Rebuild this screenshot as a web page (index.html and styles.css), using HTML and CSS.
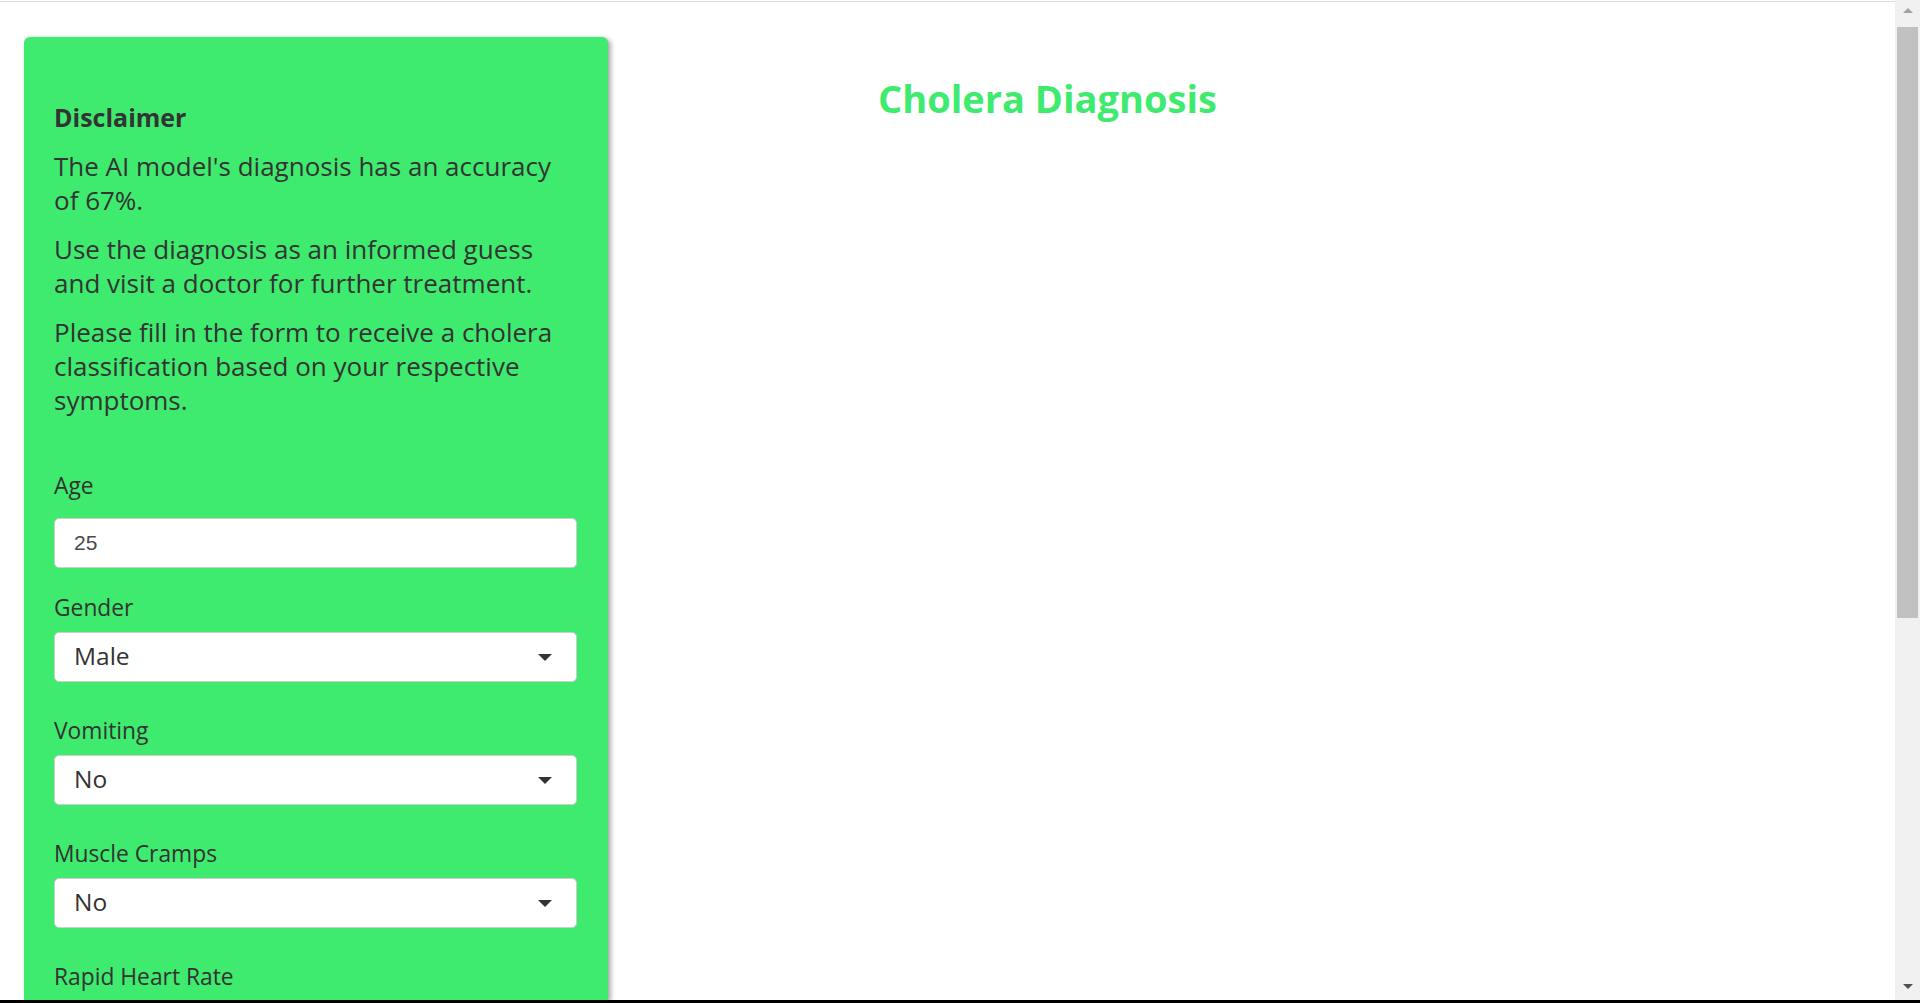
FILE: index.html
```html
<!DOCTYPE html>
<html lang="en">
<head>
<meta charset="utf-8">
<title>Cholera Diagnosis</title>
<link rel="stylesheet" href="styles.css">
</head>
<body>
<div class="window">
  <div class="viewport">
    <aside class="sidebar">
      <h3 class="title">Disclaimer</h3>
      <p class="text">The AI model's diagnosis has an accuracy of 67%.</p>
      <p class="text">Use the diagnosis as an informed guess and visit a doctor for further treatment.</p>
      <p class="text">Please fill in the form to receive a cholera classification based on your respective symptoms.</p>
      <div class="form">
        <div class="field field-text">
          <label class="label" for="age">Age</label>
          <input class="input" id="age" type="text" value="25">
        </div>
        <div class="field">
          <label class="label" for="gender">Gender</label>
          <div class="select-wrap"><select class="select" id="gender"><option>Male</option><option>Female</option></select></div>
        </div>
        <div class="field">
          <label class="label" for="vomit">Vomiting</label>
          <div class="select-wrap"><select class="select" id="vomit"><option>No</option><option>Yes</option></select></div>
        </div>
        <div class="field">
          <label class="label" for="cramps">Muscle Cramps</label>
          <div class="select-wrap"><select class="select" id="cramps"><option>No</option><option>Yes</option></select></div>
        </div>
        <div class="field">
          <label class="label" for="heart">Rapid Heart Rate</label>
          <div class="select-wrap"><select class="select" id="heart"><option>No</option><option>Yes</option></select></div>
        </div>
      </div>
    </aside>
    <main class="main">
      <h1 class="heading">Cholera Diagnosis</h1>
    </main>
  </div>
  <div class="scrollbar">
    <div class="sb-up"><span class="sb-arrow-up"></span></div>
    <div class="sb-thumb"></div>
    <div class="sb-track"></div>
    <div class="sb-down"><span class="sb-arrow-down"></span></div>
  </div>
</div>
<div class="taskbar"></div>
</body>
</html>
```

FILE: styles.css
```css
* { box-sizing: border-box; }

html, body {
  margin: 0;
  padding: 0;
  height: 1003px;
  overflow: hidden;
  background: #ffffff;
  font-family: "Open Sans", "Liberation Sans", sans-serif;
  color: #333333;
}

.window {
  display: flex;
  height: 1000px;
}

.viewport {
  flex: 1;
  display: flex;
  align-items: stretch;
  margin-top: 1px;
  border-top: 1px solid #dcdcdc;
  min-width: 0;
}

.sidebar {
  width: 584px;
  flex: none;
  margin: 35px 0 0 24px;
  padding: 63px 31px 0 30px;
  background: #3feb6e;
  border-radius: 6px 6px 0 0;
  box-shadow: 3px 2px 5px rgba(0, 0, 0, 0.33), 0 0 2px rgba(0, 0, 0, 0.12);
  overflow: hidden;
}

.title {
  margin: 0 0 15px;
  font-size: 25px;
  line-height: 34px;
  font-weight: 700;
  color: #333333;
}

.text {
  max-width: 512px;
  margin: 0 0 15px;
  font-size: 26px;
  line-height: 34px;
  font-weight: 400;
}

.form {
  padding-top: 39px;
}

.field {
  margin-bottom: 34px;
}

.field-text {
  margin-bottom: 25px;
}

.label {
  display: block;
  font-size: 22.8px;
  line-height: 30px;
  margin-bottom: 9px;
  color: #333333;
}

.field-text .label {
  margin-bottom: 17px;
}

.input {
  display: block;
  width: 100%;
  height: 50px;
  margin: 0;
  padding: 0 19px;
  border: 1px solid #cdcdcd;
  border-radius: 5px;
  background: #ffffff;
  font-family: "Liberation Sans", Arial, sans-serif;
  font-size: 21px;
  color: #4a4a4a;
  outline: none;
}

.select-wrap {
  position: relative;
}

.select-wrap::after {
  content: "";
  position: absolute;
  right: 25px;
  top: 50%;
  margin-top: -3px;
  width: 0;
  height: 0;
  border-left: 7px solid transparent;
  border-right: 7px solid transparent;
  border-top: 7px solid #333333;
  pointer-events: none;
}

.select {
  display: block;
  width: 100%;
  height: 50px;
  margin: 0;
  padding: 0 19px 3px;
  border: 1px solid #cdcdcd;
  border-radius: 5px;
  background: #ffffff;
  -webkit-appearance: none;
  appearance: none;
  font-family: "Open Sans", sans-serif;
  font-size: 24.5px;
  color: #333333;
  outline: none;
}

.main {
  flex: 1;
  padding-left: 270px;
}

.heading {
  margin: 74px 0 0;
  font-size: 38px;
  line-height: 1.2;
  font-weight: 700;
  color: #3feb6e;
  white-space: nowrap;
}

.scrollbar {
  width: 25px;
  flex: none;
  display: flex;
  flex-direction: column;
  align-items: center;
  background: #f1f1f1;
}

.sb-up {
  height: 27px;
  width: 100%;
  display: flex;
  justify-content: center;
  padding-top: 8px;
}

.sb-arrow-up {
  width: 0;
  height: 0;
  border-left: 5px solid transparent;
  border-right: 5px solid transparent;
  border-bottom: 5px solid #a3a3a3;
}

.sb-thumb {
  width: 21px;
  height: 591px;
  background: #c1c1c1;
}

.sb-track {
  flex: 1;
}

.sb-down {
  height: 22px;
  width: 100%;
  display: flex;
  justify-content: center;
  padding-top: 6px;
}

.sb-arrow-down {
  width: 0;
  height: 0;
  border-left: 5px solid transparent;
  border-right: 5px solid transparent;
  border-top: 5px solid #505050;
}

.taskbar {
  height: 3px;
  background: #000000;
}
```
